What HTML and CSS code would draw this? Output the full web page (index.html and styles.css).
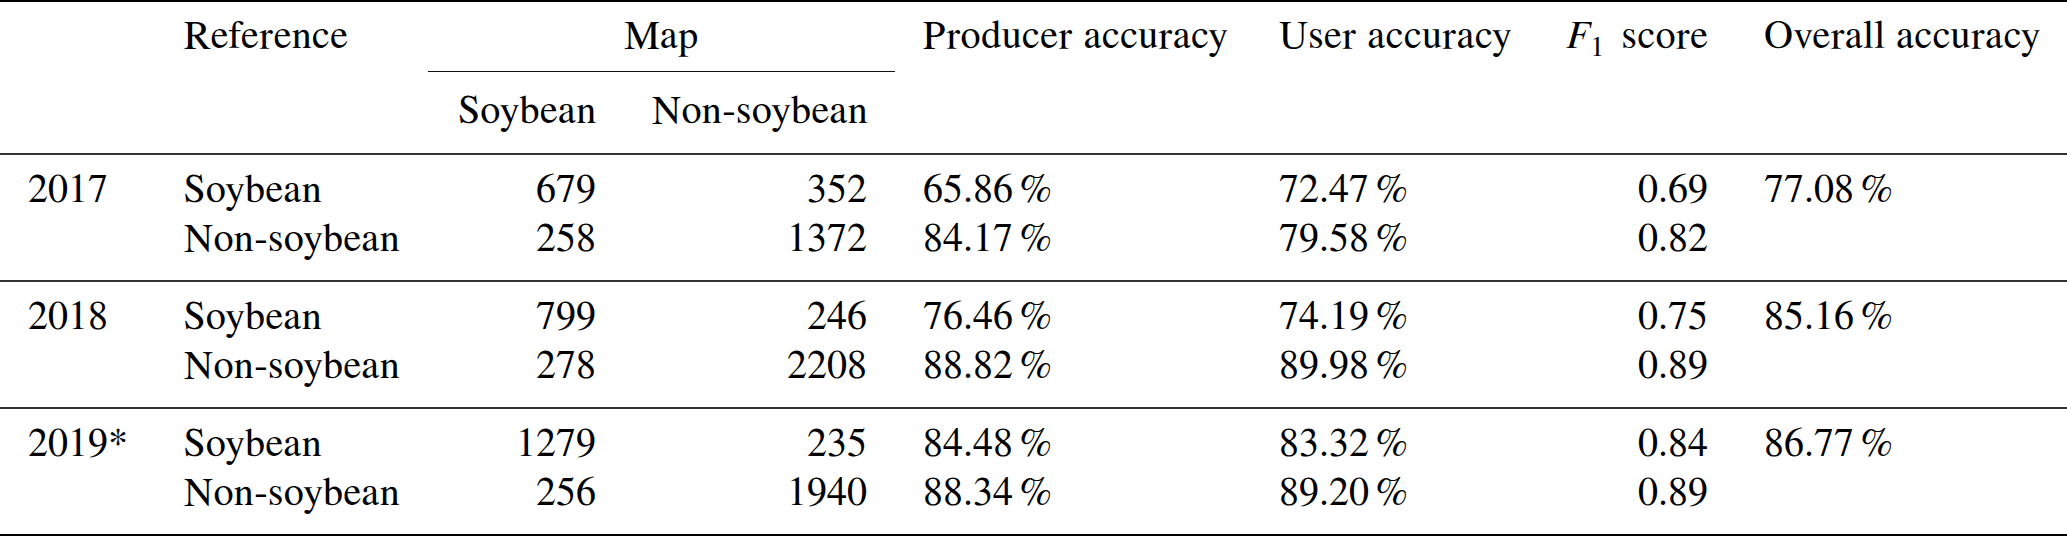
FILE: index.html
```html
<!DOCTYPE html>
<html>
<head>
<meta charset="utf-8">
<link rel="stylesheet" href="styles.css">
</head>
<body>
<div class="tbl">
  <div class="sec head">
    <div class="cell h1"></div>
    <div class="cell h1 l w">Reference</div>
    <div class="cell h1 c w map">Map</div>
    <div class="cell h1 l w">Producer accuracy</div>
    <div class="cell h1 l w">User accuracy</div>
    <div class="cell h1 r w"><i>F</i><sub>1</sub>score</div>
    <div class="cell h1 l w">Overall accuracy</div>

    <div class="cell h2"></div>
    <div class="cell h2"></div>
    <div class="cell h2 r w">Soybean</div>
    <div class="cell h2 r w">Non-soybean</div>
    <div class="cell h2"></div>
    <div class="cell h2"></div>
    <div class="cell h2"></div>
    <div class="cell h2"></div>
  </div>

  <div class="sec grp">
    <div class="cell l">2017</div><div class="cell l w">Soybean</div><div class="cell r">679</div><div class="cell r">352</div>
    <div class="cell l">65.86&#8201;%</div><div class="cell l">72.47&#8201;%</div><div class="cell r">0.69</div><div class="cell l">77.08&#8201;%</div>
    <div class="cell"></div><div class="cell l w">Non-soybean</div><div class="cell r">258</div><div class="cell r">1372</div>
    <div class="cell l">84.17&#8201;%</div><div class="cell l">79.58&#8201;%</div><div class="cell r">0.82</div><div class="cell"></div>
  </div>

  <div class="sec grp">
    <div class="cell l">2018</div><div class="cell l w">Soybean</div><div class="cell r">799</div><div class="cell r">246</div>
    <div class="cell l">76.46&#8201;%</div><div class="cell l">74.19&#8201;%</div><div class="cell r">0.75</div><div class="cell l">85.16&#8201;%</div>
    <div class="cell"></div><div class="cell l w">Non-soybean</div><div class="cell r">278</div><div class="cell r">2208</div>
    <div class="cell l">88.82&#8201;%</div><div class="cell l">89.98&#8201;%</div><div class="cell r">0.89</div><div class="cell"></div>
  </div>

  <div class="sec grp last">
    <div class="cell l">2019*</div><div class="cell l w">Soybean</div><div class="cell r">1279</div><div class="cell r">235</div>
    <div class="cell l">84.48&#8201;%</div><div class="cell l">83.32&#8201;%</div><div class="cell r">0.84</div><div class="cell l">86.77&#8201;%</div>
    <div class="cell"></div><div class="cell l w">Non-soybean</div><div class="cell r">256</div><div class="cell r">1940</div>
    <div class="cell l">88.34&#8201;%</div><div class="cell l">89.20&#8201;%</div><div class="cell r">0.89</div><div class="cell"></div>
  </div>
</div>
</body>
</html>
```
FILE: styles.css
```css
html, body {
  margin: 0;
  padding: 0;
  background: #fff;
}
.tbl {
  width: 2067px;
  font-family: FreeSerif, "Liberation Serif", "Times New Roman", serif;
  font-size: 40px;
  line-height: 49px;
  color: #000;
}
.sec {
  display: grid;
  grid-template-columns: 156px 272px 196px 271px 356px 286px 199px 331px;
  align-items: start;
}
.cell {
  padding: 0 28px;
  white-space: nowrap;
}
.w { letter-spacing: 0.8px; }
.l { text-align: left; }
.r { text-align: right; }
.c { text-align: center; }
.r.w { margin-right: -0.8px; }

.head {
  border-top: 2px solid #000;
  border-bottom: 2px solid #333;
  padding-top: 10px;
  padding-bottom: 17px;
}
.h1 { padding-bottom: 10px; }
.map {
  grid-column: span 2;
  border-bottom: 1px solid #111;
}
.h2 { padding-top: 15px; }

.grp {
  padding-top: 11px;
  padding-bottom: 16px;
  border-bottom: 2px solid #333;
}
.grp.last { border-bottom-color: #000; }

.tbl i { font-style: italic; }
.tbl sub {
  font-size: 28px;
  line-height: 0;
  vertical-align: -8px;
  margin-right: 17px;
}
```
